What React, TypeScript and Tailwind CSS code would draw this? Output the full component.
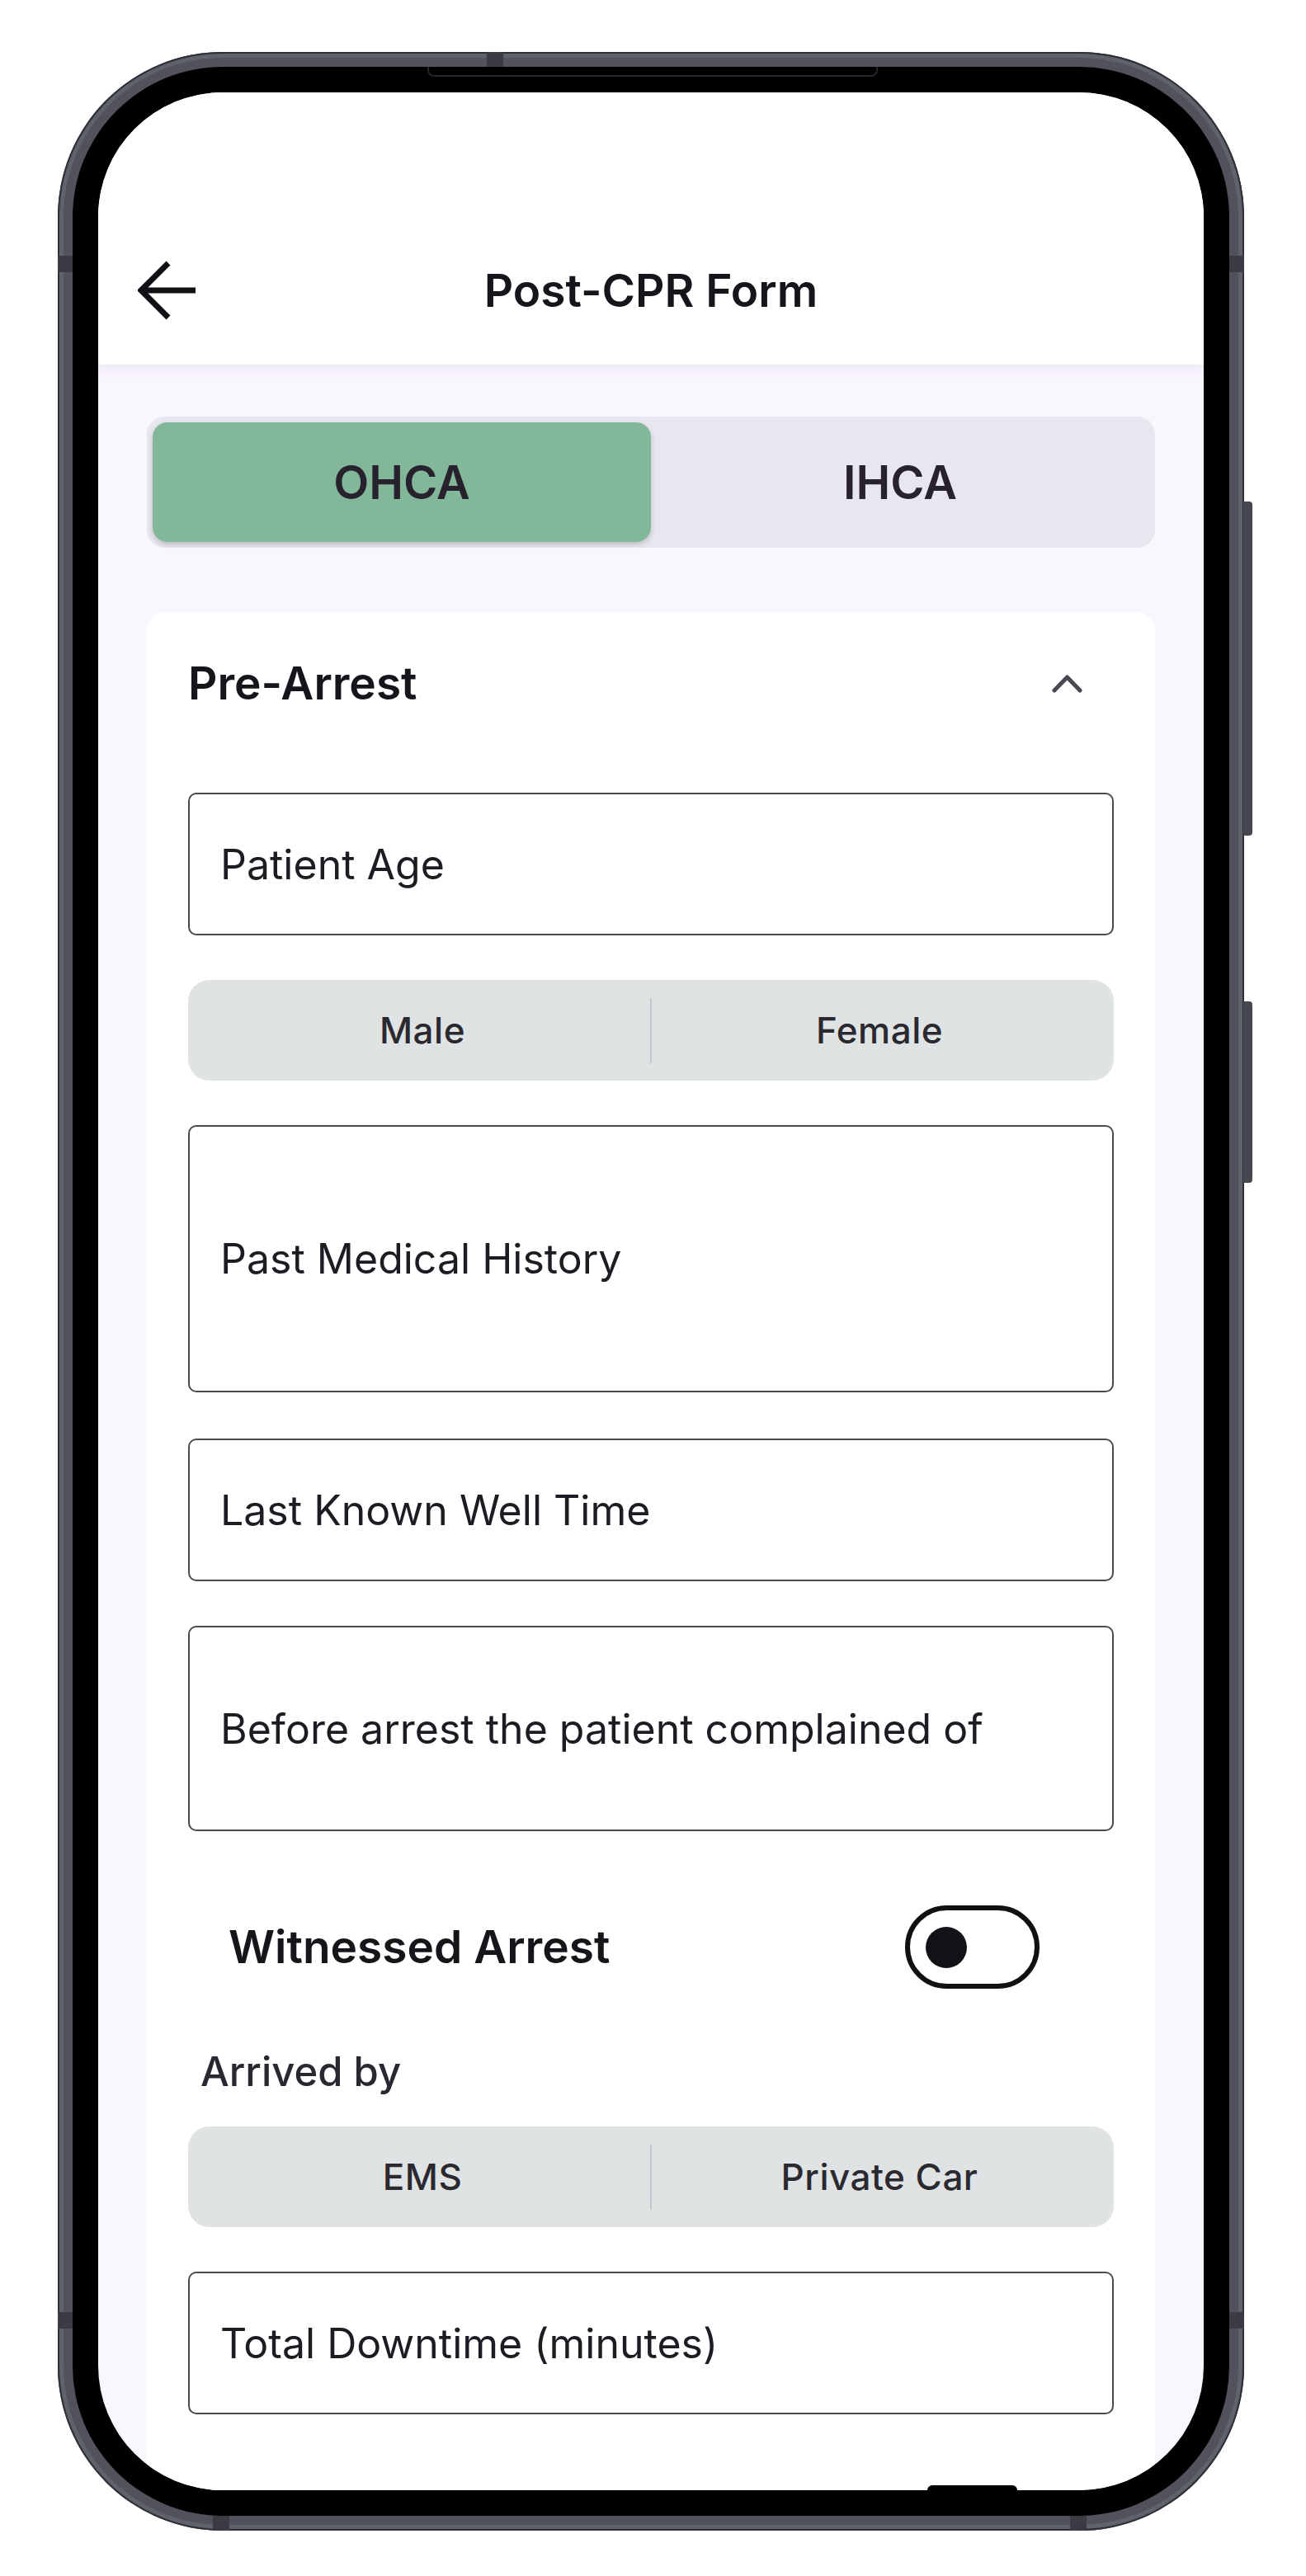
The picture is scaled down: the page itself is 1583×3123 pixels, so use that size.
import React, { useState } from 'react';

const fieldBox =
  'flex items-center rounded-[10px] border-[2.5px] border-[#4a4950] bg-white px-[37px] text-[50px] leading-none text-[#1e1c22]';

const Segmented: React.FC<{ left: string; right: string }> = ({ left, right }) => (
  <div className="flex h-[122px] items-center rounded-[26px] bg-[#e0e3e3] text-[44px] font-medium tracking-[0.5px] text-[#2b2930]">
    <div className="flex flex-1 justify-center pl-[8px]">{left}</div>
    <div className="h-[79px] w-[2px] bg-[#c6c6ca]" />
    <div className="flex flex-1 justify-center pr-[8px]">{right}</div>
  </div>
);

const Field: React.FC<{ label: string; h: string }> = ({ label, h }) => (
  <div className={`${fieldBox} ${h}`}>{label}</div>
);

export default function App() {
  const [tab, setTab] = useState<'OHCA' | 'IHCA'>('OHCA');
  const [witnessed, setWitnessed] = useState(false);

  return (
    <div className="min-h-screen bg-white font-['Inter','Liberation_Sans',sans-serif]">
      <div className="pl-[70px] pt-[63px]">
        <div className="relative h-[3005px] w-[1438px]">
          {/* side buttons */}
          <div className="absolute -right-[10px] top-[545px] h-[405px] w-[11px] rounded-r-[4px] bg-[#45464f]" />
          <div className="absolute -right-[10px] top-[1151px] h-[220px] w-[11px] rounded-r-[4px] bg-[#45464f]" />

          {/* frame */}
          <div className="h-full rounded-[200px] bg-[#51525b] p-[18px] shadow-[inset_0_0_0_2px_#2f3036,inset_0_0_0_7px_#5f616b]">
            <div className="h-full rounded-[182px] bg-black p-[31px]">
              <div className="relative flex h-full flex-col overflow-hidden rounded-[151px] bg-[#faf6fe]">
                {/* header */}
                <div className="relative z-10 border-b border-[#ebe8ef] bg-white pb-[30px] pt-[180px] shadow-[0_6px_14px_rgba(70,50,100,0.07)]">
                  <div className="grid h-[120px] grid-cols-[1fr_auto_1fr] items-center px-[48px]">
                    <button className="flex h-[72px] w-[72px] items-center">
                      <svg width="72" height="72" viewBox="0 0 72 72" fill="none" stroke="#111014" strokeWidth="7">
                        <path d="M70 36H5" />
                        <path d="M37 3L4 36L37 69" strokeLinejoin="miter" />
                      </svg>
                    </button>
                    <h1 className="text-[55px] font-semibold leading-none text-[#17151b]">Post-CPR Form</h1>
                    <div />
                  </div>
                </div>

                <div className="px-[59px] pt-[62px]">
                  {/* OHCA / IHCA */}
                  <div className="flex h-[159px] rounded-[22px] bg-[#e8e6ee] p-[7px] text-[56px] font-semibold text-[#27222e]">
                    {(['OHCA', 'IHCA'] as const).map(t => (
                      <button
                        key={t}
                        onClick={() => setTab(t)}
                        className={
                          tab === t
                            ? 'flex flex-1 items-center justify-center rounded-[18px] bg-[#82b899] shadow-[0_3px_6px_rgba(0,0,0,0.18)]'
                            : 'flex flex-1 items-center justify-center rounded-[18px]'
                        }
                      >
                        {t}
                      </button>
                    ))}
                  </div>

                  {/* card */}
                  <div className="mt-[78px] rounded-[24px] bg-white px-[50px] pb-[200px] pt-[50px]">
                    <div className="flex h-[72px] items-center justify-between pr-[38px]">
                      <h2 className="text-[55px] font-semibold leading-none text-[#17151b]">Pre-Arrest</h2>
                      <svg width="37" height="23" viewBox="0 0 37 23" fill="none" stroke="#4a4952" strokeWidth="5" strokeLinecap="round" strokeLinejoin="round">
                        <path d="M3 20L18.5 4L34 20" />
                      </svg>
                    </div>

                    <div className="mt-[97px] flex flex-col">
                      <Field label="Patient Age" h="h-[173px]" />
                      <div className="mt-[54px]">
                        <Segmented left="Male" right="Female" />
                      </div>
                      <div className="mt-[54px]">
                        <Field label="Past Medical History" h="h-[324px]" />
                      </div>
                      <div className="mt-[56px]">
                        <Field label="Last Known Well Time" h="h-[173px]" />
                      </div>
                      <div className="mt-[54px]">
                        <Field label="Before arrest the patient complained of" h="h-[249px]" />
                      </div>

                      <div className="mt-[90px] flex h-[101px] items-center justify-between pl-[49px] pr-[90px]">
                        <span className="text-[55px] font-semibold leading-none text-[#17151a]">Witnessed Arrest</span>
                        <button
                          onClick={() => setWitnessed(!witnessed)}
                          className={
                            witnessed
                              ? 'flex h-[101px] w-[163px] items-center justify-end rounded-full border-[6px] border-[#111] pr-[19px]'
                              : 'flex h-[101px] w-[163px] items-center rounded-full border-[6px] border-[#111] pl-[19px]'
                          }
                        >
                          <span className="h-[50px] w-[50px] rounded-full bg-[#141216]" />
                        </button>
                      </div>

                      <div className="mt-[71px] pl-[15px] text-[49px] font-medium leading-[60px] text-[#2a2730]">Arrived by</div>
                      <div className="mt-[36px]">
                        <Segmented left="EMS" right="Private Car" />
                      </div>
                      <div className="mt-[54px]">
                        <Field label="Total Downtime (minutes)" h="h-[173px]" />
                      </div>
                    </div>
                  </div>
                </div>

                {/* bottom bezel bump */}
                <div className="absolute bottom-0 left-[1005px] h-[6px] w-[109px] rounded-t-[6px] bg-black" />
              </div>
            </div>
          </div>

          {/* frame details */}
          <div className="absolute left-[448px] top-[18px] h-[12px] w-[546px] rounded-b-[8px] border-x-2 border-b-2 border-[#24242a]" />
          <div className="absolute left-[520px] top-0 h-[18px] w-[20px] bg-[#3b3c43]" />
          <div className="absolute left-0 top-[247px] h-[20px] w-[18px] bg-[#3b3c43]" />
          <div className="absolute right-0 top-[247px] h-[20px] w-[18px] bg-[#3b3c43]" />
          <div className="absolute left-0 top-[2740px] h-[20px] w-[18px] bg-[#3b3c43]" />
          <div className="absolute right-0 top-[2740px] h-[20px] w-[18px] bg-[#3b3c43]" />
          <div className="absolute bottom-0 left-[188px] h-[18px] w-[20px] bg-[#3b3c43]" />
          <div className="absolute bottom-0 left-[1227px] h-[18px] w-[20px] bg-[#3b3c43]" />
        </div>
      </div>
    </div>
  );
}
